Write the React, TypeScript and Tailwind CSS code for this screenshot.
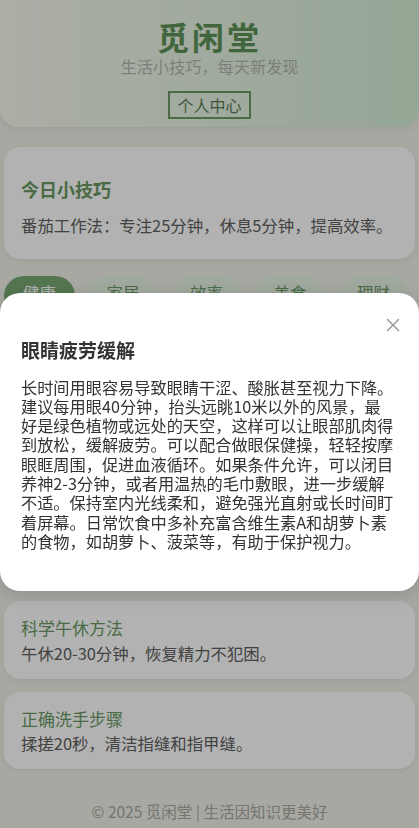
import React from "react";
import { X } from "lucide-react";

const FONT = { fontFamily: '"Noto Sans CJK SC", "Noto Sans", sans-serif' };

const categories = ["健康", "家居", "效率", "美食", "理财"];

const tips = [
  { title: "眼睛疲劳缓解", text: "每用眼40分钟，远眺放松5分钟。" },
  { title: "多喝温水", text: "每天饮水1500-2000毫升，少量多次。" },
  { title: "久坐起身活动", text: "每坐1小时，起身走动伸展5分钟。" },
  { title: "科学午休方法", text: "午休20-30分钟，恢复精力不犯困。" },
  { title: "正确洗手步骤", text: "揉搓20秒，清洁指缝和指甲缝。" },
];

const lines = [
  "长时间用眼容易导致眼睛干涩、酸胀甚至视力下降。",
  "建议每用眼40分钟，抬头远眺10米以外的风景，最",
  "好是绿色植物或远处的天空，这样可以让眼部肌肉得",
  "到放松，缓解疲劳。可以配合做眼保健操，轻轻按摩",
  "眼眶周围，促进血液循环。如果条件允许，可以闭目",
  "养神2-3分钟，或者用温热的毛巾敷眼，进一步缓解",
  "不适。保持室内光线柔和，避免强光直射或长时间盯",
  "着屏幕。日常饮食中多补充富含维生素A和胡萝卜素",
  "的食物，如胡萝卜、菠菜等，有助于保护视力。",
];

export default function App() {
  return (
    <div style={FONT} className="min-h-screen bg-[#f1f1e9]">
      <header className="flex flex-col items-center rounded-b-[18px] bg-gradient-to-r from-[#f7f9ee] to-[#d6efd6] pt-[17px] pb-[8px] shadow-[0_2px_8px_rgba(0,0,0,0.08)]">
        <h1 className="text-[32px] font-bold leading-[38px] tracking-[3px] text-[#5e9258]">觅闲堂</h1>
        <p className="text-[16.2px] leading-[22px] text-[#b3b6ae]">生活小技巧，每天新发现</p>
        <button className="mt-[14px] h-[28px] border-2 border-[#6a9a64] px-[7px] text-[16px] leading-[22px] text-[#587d54]">
          个人中心
        </button>
      </header>

      <main className="px-[4px]">
        <section className="mt-[19.5px] rounded-[16px] bg-white px-[17px] pt-[29px] pb-[22px] shadow-[0_2px_6px_rgba(0,0,0,0.06)]">
          <h2 className="mb-[11px] text-[18px] font-bold leading-[26px] text-[#6a9a64]">今日小技巧</h2>
          <p className="text-[16.4px] leading-[24px] text-[#606060]">
            番茄工作法：专注25分钟，休息5分钟，提高效率。
          </p>
        </section>

        <nav className="mt-[17px] flex gap-[12.5px]">
          {categories.map((c, i) => (
            <button
              key={c}
              className={
                i === 0
                  ? "flex h-[40px] w-[71px] shrink-0 items-center justify-center rounded-full bg-[#78a872] pb-[6px] text-[16.4px] text-white"
                  : "flex h-[40px] w-[71px] shrink-0 items-center justify-center rounded-full bg-[#e6f2e3] pb-[6px] text-[16.4px] text-[#6a9a64]"
              }
            >
              {c}
            </button>
          ))}
        </nav>

        <ul className="mt-[14px] flex flex-col gap-[13px]">
          {tips.map((t) => (
            <li key={t.title} className="rounded-[16px] bg-white px-[17px] py-[16px] shadow-[0_2px_6px_rgba(0,0,0,0.06)]">
              <h3 className="mb-[4.5px] text-[17px] leading-[21px] text-[#6a9a64]">{t.title}</h3>
              <p className="text-[16.4px] leading-[20px] text-[#606060]">{t.text}</p>
            </li>
          ))}
        </ul>
      </main>

      <footer className="pt-[32px] pb-[10px] text-center text-[15.5px] leading-[20px] text-[#a8a8a4]">
        © 2025 觅闲堂 | 生活因知识更美好
      </footer>

      <div className="fixed inset-0 bg-black/30 backdrop-blur-[0.6px]">
        <div className="relative mt-[293px] rounded-[20px] bg-white px-[21px] pt-[43px] pb-[40px] shadow-[0_4px_20px_rgba(0,0,0,0.15)]">
          <button className="absolute top-[21px] right-[15px] text-[#9a9a9a]" aria-label="关闭">
            <X size={22} strokeWidth={1.6} />
          </button>
          <h2 className="mb-[13.6px] text-[19px] font-bold leading-[28px] text-[#333]">眼睛疲劳缓解</h2>
          <p className="text-[16.2px] leading-[19.3px] text-[#333]">
            {lines.map((l, i) => (
              <React.Fragment key={i}>
                <span className="whitespace-nowrap">{l}</span>
                {i < lines.length - 1 && <br />}
              </React.Fragment>
            ))}
          </p>
        </div>
      </div>
    </div>
  );
}
